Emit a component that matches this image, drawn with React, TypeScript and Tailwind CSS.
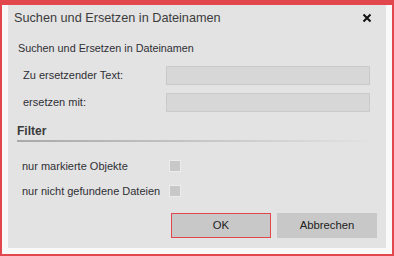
export default function App() {
  return (
    <div className="flex h-[256px] w-[394px] flex-col bg-[#e1474c] px-[2px] pb-[2px] pt-[5px] font-['Liberation_Sans',Arial,sans-serif] text-[#2f2f35]">
      <div className="flex flex-1 flex-col bg-[#f9f9f9] px-[6px] pb-[6px]">
        <div className="flex flex-1 flex-col whitespace-nowrap bg-[#e3e3e3]">
          <div className="flex h-[27px] items-center justify-between pl-[6px] pr-[14px]">
            <span className="text-[12.7px] text-[#3c3c3c]">Suchen und Ersetzen in Dateinamen</span>
            <svg width="10" height="10" viewBox="0 0 10 10" className="mt-[-1px]">
              <path d="M1.5 1.5 L8.5 8.5 M8.5 1.5 L1.5 8.5" stroke="#111" strokeWidth="2" />
            </svg>
          </div>

          <div className="mt-[8px] flex h-[16px] items-center pl-[10px] text-[10.8px]">
            Suchen und Ersetzen in Dateinamen
          </div>

          <div className="mt-[10px] flex h-[19px] items-center text-[11px]">
            <span className="w-[158px] pl-[15px]">Zu ersetzender Text:</span>
            <div className="h-[19px] w-[204px] border border-[#cacaca] bg-[#d7d7d7]" />
          </div>
          <div className="mt-[8px] flex h-[19px] items-center text-[11px]">
            <span className="w-[158px] pl-[15px]">ersetzen mit:</span>
            <div className="h-[19px] w-[204px] border border-[#cacaca] bg-[#d7d7d7]" />
          </div>

          <div className="mt-[11px] flex h-[16px] items-center pl-[9px] text-[12px] font-bold text-[#3a3a3a]">
            Filter
          </div>
          <div className="ml-[9px] mt-[1px] h-[2px] w-[360px] bg-gradient-to-r from-[#a9a9a9] to-[#e3e3e3]" />

          <div className="mt-[18px] flex h-[12px] items-center text-[11px]">
            <span className="w-[161px] pl-[14px]">nur markierte Objekte</span>
            <div className="h-[12px] w-[12px] border border-[#ececec] bg-[#c8c8c8]" />
          </div>
          <div className="mt-[13px] flex h-[12px] items-center text-[11px]">
            <span className="w-[161px] pl-[14px]">nur nicht gefundene Dateien</span>
            <div className="h-[12px] w-[12px] border border-[#ececec] bg-[#c8c8c8]" />
          </div>

          <div className="mt-[16px] flex gap-[6px] pl-[163px] text-[11.3px]">
            <button className="h-[25px] w-[100px] border border-[#e0474c] bg-[#c8c8c8] text-[#222]">OK</button>
            <button className="h-[25px] w-[100px] bg-[#c8c8c8] text-[#222]">Abbrechen</button>
          </div>
        </div>
      </div>
    </div>
  );
}
